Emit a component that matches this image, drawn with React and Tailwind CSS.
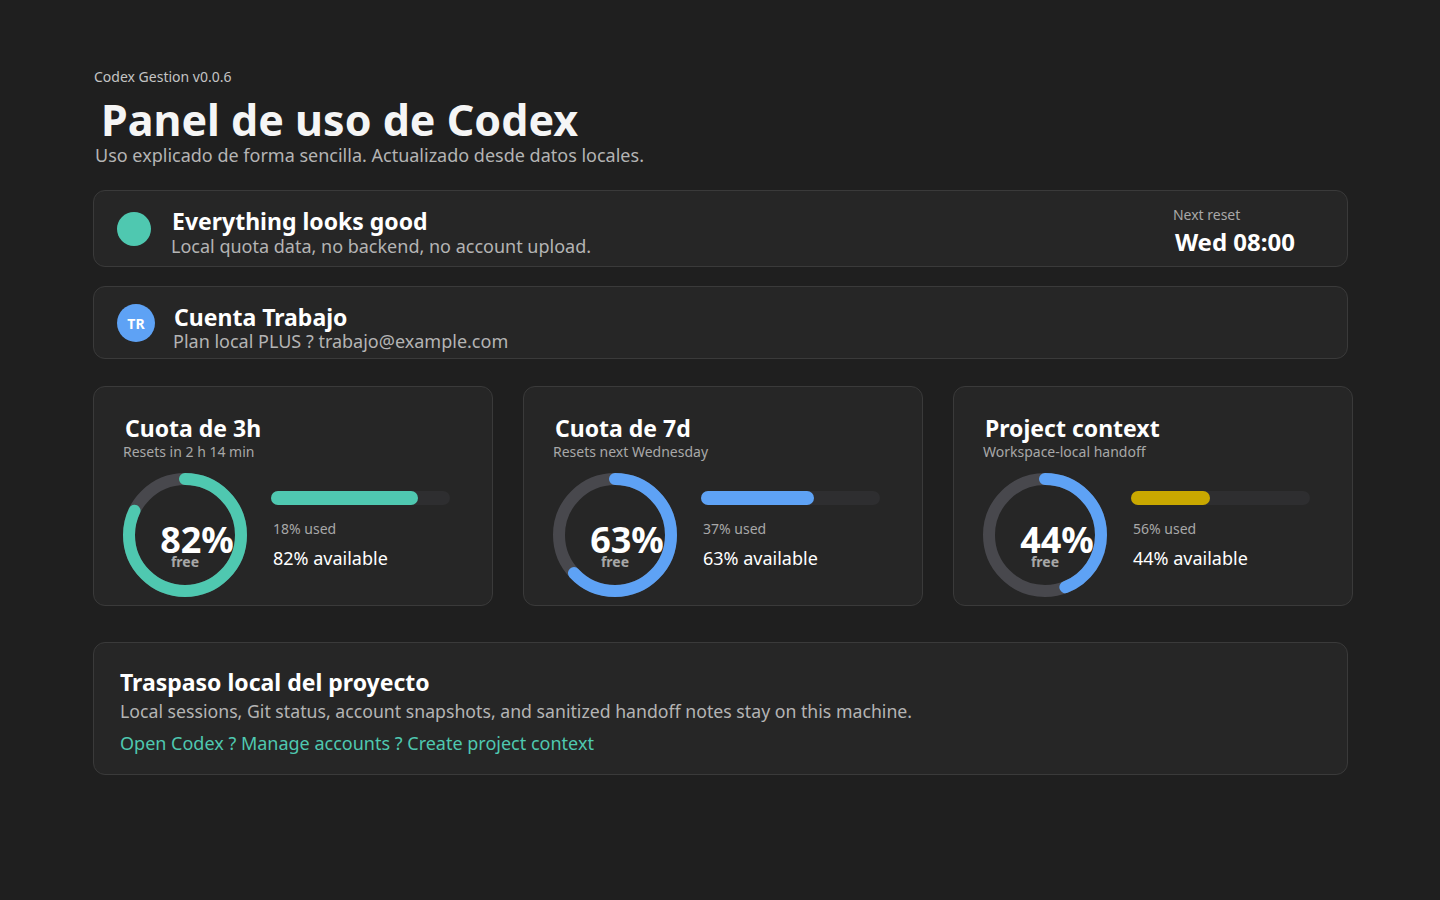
import React from 'react';

const quotas = [
  { title: 'Cuota de 3h', sub: 'Resets in 2 h 14 min', free: 82, ring: '#4fc8b0', bar: '#4fc8b0' },
  { title: 'Cuota de 7d', sub: 'Resets next Wednesday', free: 63, ring: '#5ea2f5', bar: '#5ea2f5' },
  { title: 'Project context', sub: 'Workspace-local handoff', free: 44, ring: '#5ea2f5', bar: '#c9a800' },
];

const Ring = ({ value, color }) => {
  const r = 56;
  const c = 2 * Math.PI * r;
  return (
    <div className="relative w-[124px] h-[124px] shrink-0">
      <svg width="124" height="124" viewBox="0 0 124 124" className="-rotate-90">
        <circle cx="62" cy="62" r={r} fill="none" stroke="#48484d" strokeWidth="12" />
        <circle
          cx="62"
          cy="62"
          r={r}
          fill="none"
          stroke={color}
          strokeWidth="12"
          strokeLinecap="round"
          strokeDasharray={`${(c * value) / 100} ${c}`}
        />
      </svg>
      <div className="absolute inset-0 flex flex-col items-center justify-center pt-[22px]">
        <span className="text-[36px] font-bold leading-[36px] text-white pl-[24px]">{value}%</span>
        <span className="text-[14px] font-bold leading-[16px] text-[#a8a8a8] -mt-[4px]">free</span>
      </div>
    </div>
  );
};

const QuotaCard = ({ title, sub, free, ring, bar }) => (
  <div className="w-[400px] shrink-0 h-[220px] rounded-[12px] border border-[#3a3a3a] bg-[#262626] pl-[29px] pt-[26px]">
    <h3 className="text-[23px] font-bold leading-[30px] text-white pl-[2px]">{title}</h3>
    <p className="text-[14px] leading-[18px] text-[#a8a8a8]">{sub}</p>
    <div className="flex items-start gap-[24px] mt-[12px]">
      <Ring value={free} color={ring} />
      <div className="pt-[18px] w-[179px]">
        <div className="h-[14px] w-[179px] rounded-full bg-[#2e2e30]">
          <div className="h-[14px] rounded-full" style={{ width: `${free}%`, backgroundColor: bar }} />
        </div>
        <p className="mt-[15px] text-[14px] leading-[18px] text-[#a8a8a8] pl-[2px]">{100 - free}% used</p>
        <p className="mt-[9px] text-[18px] leading-[22px] text-white pl-[2px]">{free}% available</p>
      </div>
    </div>
  </div>
);

export default function App() {
  return (
    <div className="min-h-screen bg-[#1f1f1f] text-white font-['Noto_Sans','Open_Sans',sans-serif]">
      <div className="pl-[93px] pt-[67px] w-[1348px]">
        <p className="text-[14px] leading-[20px] text-[#c4c4c4] pl-[1px]">Codex Gestion v0.0.6</p>
        <h1 className="text-[43px] font-bold leading-[56px] text-[#f5f5f5] pl-[8px] mt-[5px]">Panel de uso de Codex</h1>
        <p className="text-[18px] leading-[20px] text-[#b4b4b4] pl-[2px] -mt-[3px]">
          Uso explicado de forma sencilla. Actualizado desde datos locales.
        </p>

        <div className="mt-[25px] h-[77px] rounded-[12px] border border-[#3a3a3a] bg-[#262626] flex items-center pl-[23px] pr-[52px]">
          <div className="w-[34px] h-[34px] rounded-full bg-[#4fc8b0]" />
          <div className="ml-[21px] flex-1 pt-[6px]">
            <p className="text-[23px] font-bold leading-[28px] text-white">Everything looks good</p>
            <p className="text-[18px] leading-[22px] text-[#b4b4b4] -ml-[1px]">Local quota data, no backend, no account upload.</p>
          </div>
          <div className="pt-[6px]">
            <p className="text-[14px] leading-[18px] text-[#a8a8a8]">Next reset</p>
            <p className="text-[24px] font-bold leading-[32px] text-white pl-[2px] mt-[2px]">Wed 08:00</p>
          </div>
        </div>

        <div className="mt-[19px] h-[73px] rounded-[12px] border border-[#3a3a3a] bg-[#262626] flex items-center pl-[23px]">
          <div className="w-[38px] h-[38px] rounded-full bg-[#5ea2f5] flex items-center justify-center pt-[2px]">
            <span className="text-[14px] font-bold text-white">TR</span>
          </div>
          <div className="ml-[19px] pt-[8px]">
            <p className="text-[23px] font-bold leading-[28px] text-white">Cuenta Trabajo</p>
            <p className="text-[18px] leading-[20px] text-[#b4b4b4] -ml-[1px]">Plan local PLUS ? trabajo@example.com</p>
          </div>
        </div>

        <div className="mt-[27px] flex gap-[30px]">
          {quotas.map((q) => (
            <QuotaCard key={q.title} {...q} />
          ))}
        </div>

        <div className="mt-[36px] h-[133px] rounded-[12px] border border-[#3a3a3a] bg-[#262626] pl-[26px] pt-[24px]">
          <h2 className="text-[23px] font-bold leading-[30px] text-white">Traspaso local del proyecto</h2>
          <p className="text-[17.7px] leading-[24px] text-[#b4b4b4] mt-[2px]">
            Local sessions, Git status, account snapshots, and sanitized handoff notes stay on this machine.
          </p>
          <p className="text-[18px] leading-[24px] text-[#4fc8b0] mt-[8px]">
            Open Codex ? Manage accounts ? Create project context
          </p>
        </div>
      </div>
    </div>
  );
}
